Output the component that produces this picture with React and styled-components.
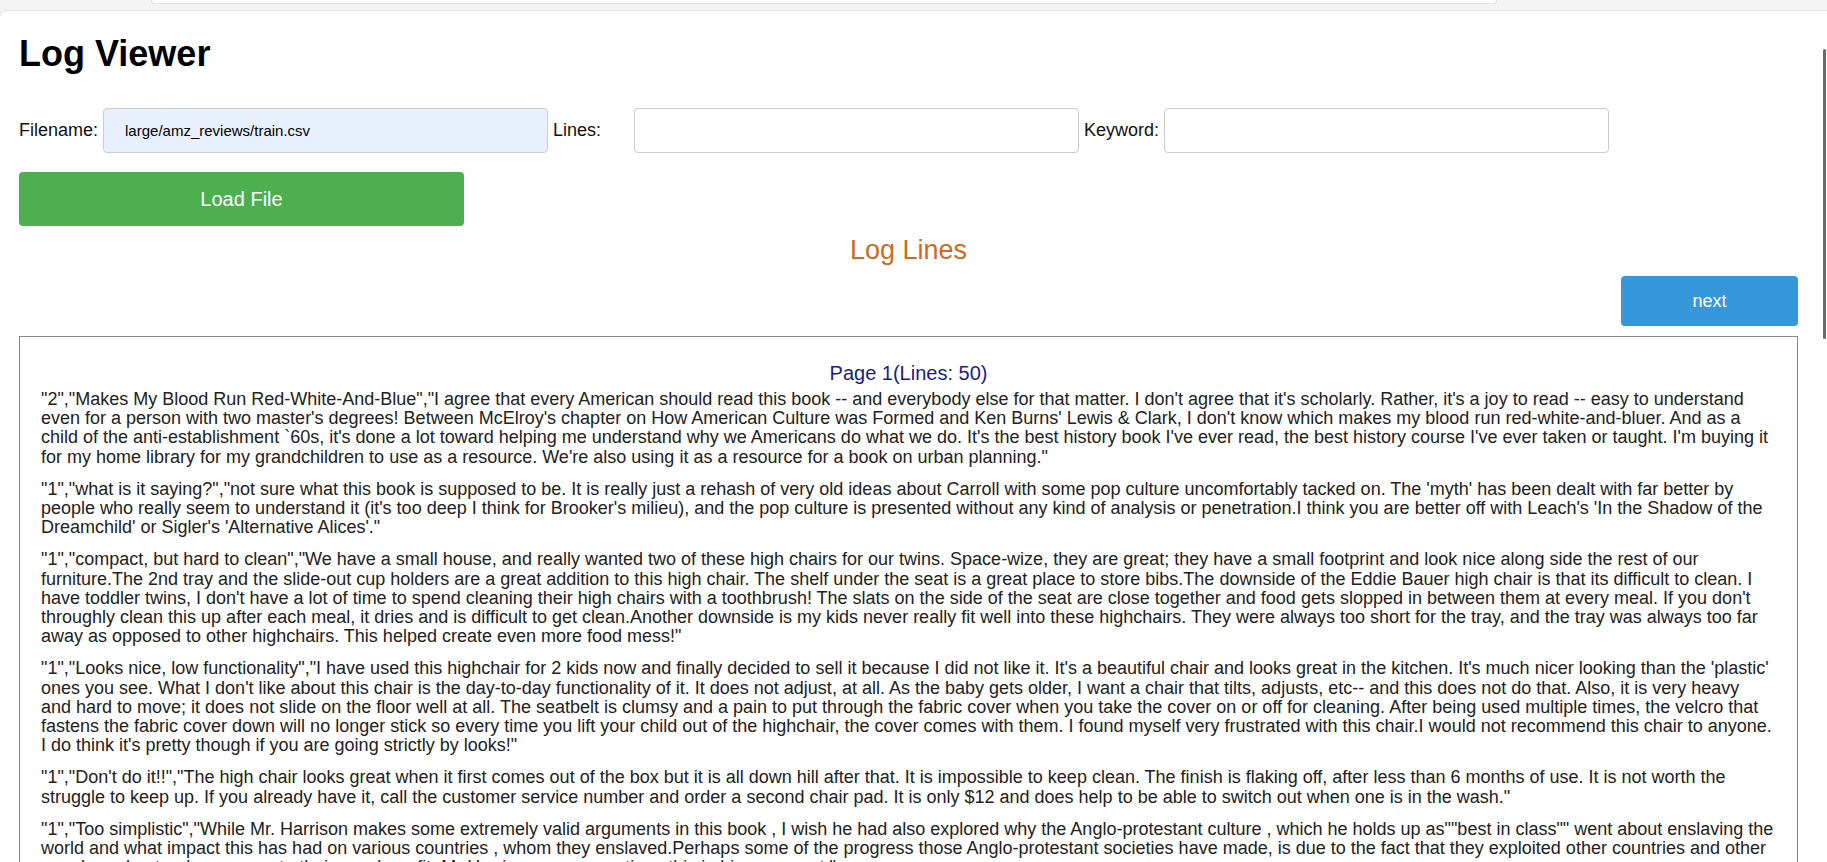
import React from 'react';
import styled, { createGlobalStyle } from 'styled-components';

const GlobalStyle = createGlobalStyle`
  html, body {
    margin: 0;
    padding: 0;
    overflow: hidden;
    background: #f3f3f3;
  }
  body {
    font-family: "Liberation Sans", Arial, sans-serif;
    color: #222;
  }
`;

const Chrome = styled.div`
  height: 10px;
  display: flex;
  padding-left: 151px;
`;

const ChromeTab = styled.div`
  width: 1344px;
  height: 3px;
  background: #fff;
  border: 1px solid #e2e2e2;
  border-top: none;
  border-radius: 0 0 6px 6px;
`;

const Page = styled.div`
  position: relative;
  background: #fff;
  border-top: 1px solid #e6e6e6;
  border-top-left-radius: 8px;
  padding: 0 29px 40px 19px;
  min-height: 900px;
`;

const ScrollThumb = styled.div`
  position: absolute;
  right: 1px;
  top: 38px;
  width: 3px;
  height: 290px;
  background: #6b6b6b;
  border-radius: 2px;
`;

const Title = styled.h1`
  margin: 22px 0 0;
  font-size: 36px;
  font-weight: bold;
  color: #000;
`;

const FormRow = styled.div`
  display: flex;
  align-items: center;
  margin-top: 33px;
`;

const Label = styled.label`
  font-size: 18px;
  color: #111;
  margin-left: ${(p) => p.$before || 0}px;
  margin-right: ${(p) => p.$after || 5}px;
`;

const Input = styled.input`
  box-sizing: border-box;
  width: 445px;
  height: 45px;
  padding: 0 0 0 21px;
  border: 1px solid #ccc;
  border-radius: 4px;
  background: ${(p) => (p.$filled ? '#e8f0fe' : '#fff')};
  font-family: "Liberation Sans", Arial, sans-serif;
  font-size: 15px;
  color: #000;
  outline: none;
`;

const LoadButton = styled.button`
  display: block;
  width: 445px;
  height: 54px;
  margin-top: 19px;
  border: none;
  border-radius: 4px;
  background: #4caf50;
  color: #fff;
  font-family: "Liberation Sans", Arial, sans-serif;
  font-size: 20px;
`;

const SectionTitle = styled.h2`
  margin: 9px 0 0;
  text-align: center;
  font-size: 27px;
  font-weight: normal;
  color: #d2691e;
`;

const Toolbar = styled.div`
  display: flex;
  justify-content: flex-end;
  margin-top: 10px;
`;

const NextButton = styled.button`
  width: 177px;
  height: 50px;
  border: none;
  border-radius: 4px;
  background: #3498db;
  color: #fff;
  font-family: "Liberation Sans", Arial, sans-serif;
  font-size: 18px;
`;

const LogBox = styled.div`
  margin-top: 10px;
  border: 1px solid #888;
  padding: 25px 23px 20px 21px;
`;

const PageHeading = styled.div`
  text-align: center;
  font-size: 20px;
  color: #1c1c87;
  margin-bottom: 5px;
  padding-left: 2px;
`;

const Entry = styled.p`
  margin: 0 0 13px;
  font-size: 18px;
  line-height: 19.2px;
  color: #222;
`;

const entries = [
  `"2","Makes My Blood Run Red-White-And-Blue","I agree that every American should read this book -- and everybody else for that matter. I don't agree that it's scholarly. Rather, it's a joy to read -- easy to understand even for a person with two master's degrees! Between McElroy's chapter on How American Culture was Formed and Ken Burns' Lewis & Clark, I don't know which makes my blood run red-white-and-bluer. And as a child of the anti-establishment \`60s, it's done a lot toward helping me understand why we Americans do what we do. It's the best history book I've ever read, the best history course I've ever taken or taught. I'm buying it for my home library for my grandchildren to use as a resource. We're also using it as a resource for a book on urban planning."`,
  `"1","what is it saying?","not sure what this book is supposed to be. It is really just a rehash of very old ideas about Carroll with some pop culture uncomfortably tacked on. The 'myth' has been dealt with far better by people who really seem to understand it (it's too deep I think for Brooker's milieu), and the pop culture is presented without any kind of analysis or penetration.I think you are better off with Leach's 'In the Shadow of the Dreamchild' or Sigler's 'Alternative Alices'."`,
  `"1","compact, but hard to clean","We have a small house, and really wanted two of these high chairs for our twins. Space-wize, they are great; they have a small footprint and look nice along side the rest of our furniture.The 2nd tray and the slide-out cup holders are a great addition to this high chair. The shelf under the seat is a great place to store bibs.The downside of the Eddie Bauer high chair is that its difficult to clean. I have toddler twins, I don't have a lot of time to spend cleaning their high chairs with a toothbrush! The slats on the side of the seat are close together and food gets slopped in between them at every meal. If you don't throughly clean this up after each meal, it dries and is difficult to get clean.Another downside is my kids never really fit well into these highchairs. They were always too short for the tray, and the tray was always too far away as opposed to other highchairs. This helped create even more food mess!"`,
  `"1","Looks nice, low functionality","I have used this highchair for 2 kids now and finally decided to sell it because I did not like it. It's a beautiful chair and looks great in the kitchen. It's much nicer looking than the 'plastic' ones you see. What I don't like about this chair is the day-to-day functionality of it. It does not adjust, at all. As the baby gets older, I want a chair that tilts, adjusts, etc-- and this does not do that. Also, it is very heavy and hard to move; it does not slide on the floor well at all. The seatbelt is clumsy and a pain to put through the fabric cover when you take the cover on or off for cleaning. After being used multiple times, the velcro that fastens the fabric cover down will no longer stick so every time you lift your child out of the highchair, the cover comes with them. I found myself very frustrated with this chair.I would not recommend this chair to anyone. I do think it's pretty though if you are going strictly by looks!"`,
  `"1","Don't do it!!","The high chair looks great when it first comes out of the box but it is all down hill after that. It is impossible to keep clean. The finish is flaking off, after less than 6 months of use. It is not worth the struggle to keep up. If you already have it, call the customer service number and order a second chair pad. It is only $12 and does help to be able to switch out when one is in the wash."`,
  `"1","Too simplistic","While Mr. Harrison makes some extremely valid arguments in this book , I wish he had also explored why the Anglo-protestant culture , which he holds up as""best in class"" went about enslaving the world and what impact this has had on various countries , whom they enslaved.Perhaps some of the progress those Anglo-protestant societies have made, is due to the fact that they exploited other countries and other people and natural resources to their own benefit. Mr Harrison never mentions this in his argument."`,
  `"2","Great value","Bought this for my daughter and she loves it. Sturdy, easy to assemble and looks great in her room."`,
];

export default function App() {
  return (
    <>
      <GlobalStyle />
      <Chrome>
        <ChromeTab />
      </Chrome>
      <Page>
        <ScrollThumb />
        <Title>Log Viewer</Title>
        <FormRow>
          <Label>Filename:</Label>
          <Input $filled defaultValue="large/amz_reviews/train.csv" />
          <Label $before={5} $after={33}>Lines:</Label>
          <Input />
          <Label $before={5}>Keyword:</Label>
          <Input />
        </FormRow>
        <LoadButton>Load File</LoadButton>
        <SectionTitle>Log Lines</SectionTitle>
        <Toolbar>
          <NextButton>next</NextButton>
        </Toolbar>
        <LogBox>
          <PageHeading>Page 1(Lines: 50)</PageHeading>
          {entries.map((text, i) => (
            <Entry key={i}>{text}</Entry>
          ))}
        </LogBox>
      </Page>
    </>
  );
}
